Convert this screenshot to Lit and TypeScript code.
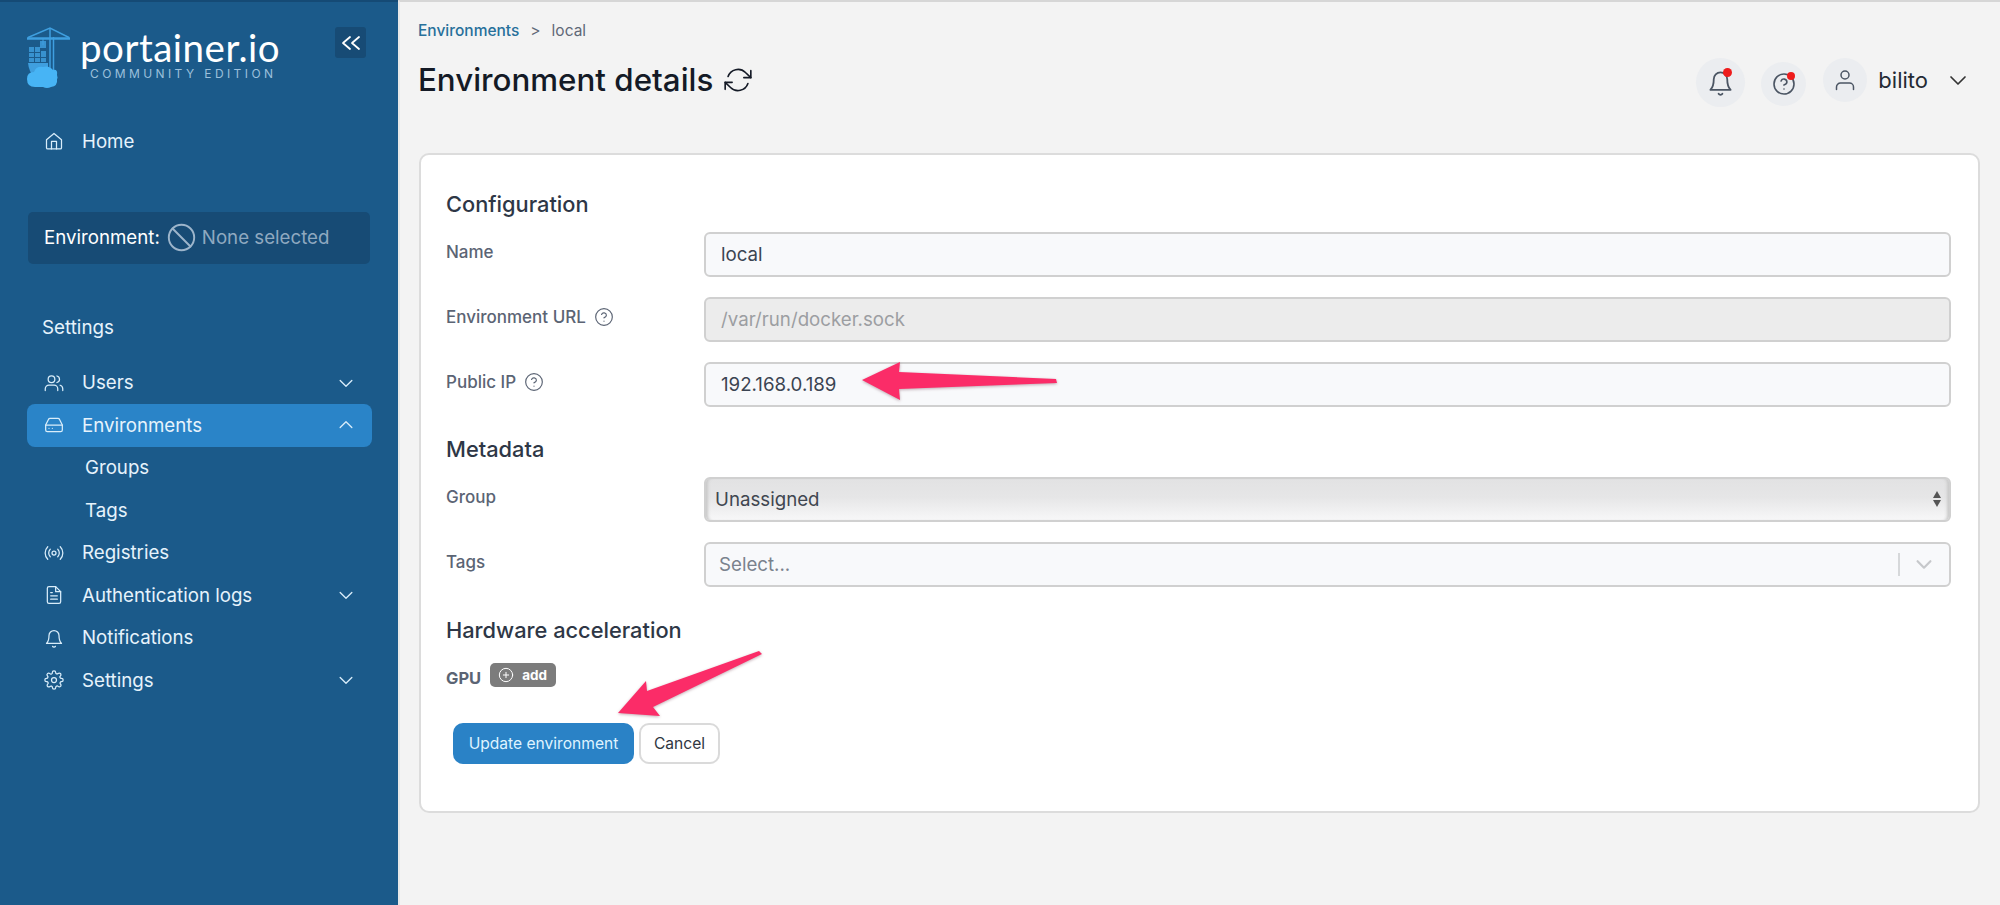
import { LitElement, html, css, svg } from "lit";
import { customElement } from "lit/decorators.js";

const ic = (body: unknown, size = 20, sw = 1.7) => html`<svg width=${size} height=${size} viewBox="0 0 24 24" fill="none" stroke="currentColor" stroke-width=${sw} stroke-linecap="round" stroke-linejoin="round">${body}</svg>`;

const icons: Record<string, unknown> = {
  home: svg`<path d="M3 10.5 12 3l9 7.5V20a1.5 1.5 0 0 1-1.5 1.5h-15A1.5 1.5 0 0 1 3 20z"/><path d="M9 21.5V12.5h6v9"/>`,
  users: svg`<circle cx="9" cy="7.5" r="4"/><path d="M1.5 21v-2a4.5 4.5 0 0 1 4.5-4.5h6a4.5 4.5 0 0 1 4.5 4.5v2"/><path d="M15.5 3.6a4 4 0 0 1 0 7.8"/><path d="M22.5 21v-2a4.5 4.5 0 0 0-3.2-4.3"/>`,
  drive: svg`<path d="M22 12H2"/><path d="M5.5 5 2 12v6a2 2 0 0 0 2 2h16a2 2 0 0 0 2-2v-6l-3.5-7a2 2 0 0 0-1.8-1H7.3a2 2 0 0 0-1.8 1z"/><path d="M6 16h.01M10 16h.01"/>`,
  radio: svg`<circle cx="12" cy="12" r="2.4"/><path d="M16.5 7.5a6.4 6.4 0 0 1 0 9M7.5 16.5a6.4 6.4 0 0 1 0-9M19.5 4.5a10.6 10.6 0 0 1 0 15M4.5 19.5a10.6 10.6 0 0 1 0-15"/>`,
  file: svg`<path d="M14 2H6a2 2 0 0 0-2 2v16a2 2 0 0 0 2 2h12a2 2 0 0 0 2-2V8z"/><path d="M14 2v6h6M16 13H8M16 17H8M10 9H8"/>`,
  bell: svg`<path d="M18 9a6 6 0 0 0-12 0c0 7-2.6 9-3 9.5h18c-.4-.5-3-2.5-3-9.5"/><path d="M10.3 22a2 2 0 0 0 3.4 0"/>`,
  gear: svg`<circle cx="12" cy="12" r="3"/><path d="M19.4 15a1.65 1.65 0 0 0 .33 1.82l.06.06a2 2 0 1 1-2.83 2.83l-.06-.06a1.65 1.65 0 0 0-2.82 1.17V21a2 2 0 1 1-4 0v-.09a1.65 1.65 0 0 0-2.82-1.17l-.06.06a2 2 0 1 1-2.83-2.83l.06-.06A1.65 1.65 0 0 0 3.09 14H3a2 2 0 1 1 0-4h.09a1.65 1.65 0 0 0 1.17-2.82l-.06-.06a2 2 0 1 1 2.83-2.83l.06.06A1.65 1.65 0 0 0 10 3.09V3a2 2 0 1 1 4 0v.09a1.65 1.65 0 0 0 2.82 1.17l.06-.06a2 2 0 1 1 2.83 2.83l-.06.06A1.65 1.65 0 0 0 20.91 10H21a2 2 0 1 1 0 4h-.09a1.65 1.65 0 0 0-1.51 1z"/>`,
  down: svg`<path d="m5 9 7 7 7-7"/>`,
  up: svg`<path d="m5 15 7-7 7 7"/>`,
  help: svg`<circle cx="12" cy="12" r="10"/><path d="M9.1 9a3 3 0 0 1 5.8 1c0 2-3 3-3 3M12 17h.01"/>`,
  refresh: svg`<path d="M23 4v6h-6M1 20v-6h6"/><path d="M3.5 9a9 9 0 0 1 14.9-3.4L23 10M1 14l4.6 4.4A9 9 0 0 0 20.5 15"/>`,
  user: svg`<circle cx="12" cy="7" r="4"/><path d="M3.5 21.5V19a4 4 0 0 1 4-4h9a4 4 0 0 1 4 4v2.5"/>`,
  plus: svg`<circle cx="12" cy="12" r="10"/><path d="M12 8v8M8 12h8"/>`,
};

const logo = html`<svg class="logo" width="46" height="62" viewBox="0 0 46 62" fill="none">
  <g stroke="#3f9fdf"><path d="M1 11.5 H44" stroke-width="2.4"/><path d="M2 10.5 L24 1 L43 10.5" stroke-width="1.4"/><path d="M24 1 V44" stroke-width="1.5"/><path d="M27.5 10 V44" stroke-width="1.5"/><path d="M17 12 V18" stroke-width="1"/></g>
  <g fill="#3f9fdf" opacity=".82"><rect x="14" y="14" width="6" height="7"/><rect x="3" y="20" width="5" height="5"/><rect x="9" y="20" width="5" height="5"/><rect x="3" y="26" width="5" height="4"/><rect x="9" y="26" width="5" height="4"/><rect x="15" y="24" width="5" height="6"/><rect x="3" y="31" width="5" height="4"/><rect x="9" y="31" width="5" height="4"/><rect x="15" y="31" width="5" height="4"/></g>
  <path d="M2 36 H22 V42 L8 50 Q3 45 2 36Z" fill="#3f9fdf"/>
  <path d="M9 60 Q1 60 1 52 Q1 45 8 45 Q10 39 17 40 Q23 38 27 43 Q32 42 31 48 Q32 51 31 52 Q32 59 25 60 Q21 62 17 60 Z" fill="#47b4f5"/>
</svg>`;

@customElement("app-root")
export class AppRoot extends LitElement {
  static styles = css`
    :host { display: block; position: relative; width: 2000px; height: 905px; overflow: hidden; font-family: Inter, "Liberation Sans", sans-serif; background: #f3f3f3; }
    * { box-sizing: border-box; }
    .app { display: flex; height: 905px; }
    .side { width: 398px; flex: none; background: #1b5a8a; color: #e8f4fc; border-top: 2px solid #154a75; display: flex; flex-direction: column; }
    .brand { display: flex; padding: 25px 0 0 26px; height: 118px; position: relative; }
    .wordmark { margin-left: 8px; display: flex; flex-direction: column; }
    .wm { font-family: Lato, sans-serif; font-size: 38.5px; line-height: 38px; margin-top: 1px; color: #fff; font-weight: 400; letter-spacing: .5px; }
    .ce { font-size: 12px; letter-spacing: 3.4px; color: #9cc0dc; margin: 1px 0 0 10px; line-height: 14px; white-space: nowrap; }
    .collapse { margin-left: auto; margin-right: 32px; width: 31px; height: 31px; border-radius: 3px; background: #174b75; display: flex; align-items: center; justify-content: center; color: #fff; }
    .item { height: 42.5px; display: flex; align-items: center; padding: 0 16px 0 17px; margin: 0 26px 0 27px; font-size: 18.7px; border-radius: 8px; color: #e6f3fc; }
    .item .i { width: 38px; display: flex; flex: none; color: #d9edfa; }
    .item .t { flex: 1; }
    .item .c { display: flex; color: #d9edfa; }
    .item.on { background: #2a84c8; }
    .sub { height: 42.5px; display: flex; align-items: center; padding-left: 85px; font-size: 18.7px; color: #e6f3fc; }
    .envbox { margin: 49px 28px 0; height: 52px; background: #174b75; border-radius: 5px; display: flex; align-items: center; padding-left: 16px; font-size: 18.7px; color: #fff; white-space: nowrap; }
    .envbox svg { margin: 0 6px 0 7px; color: #9db5cb; }
    .envbox .none { color: #8fa9c0; }
    .sect { margin: 51px 0 0 42px; font-size: 18.8px; line-height: 26px; height: 26px; color: #e6f3fc; }
    .list { margin-top: 21px; }
    .main { flex: 1; min-width: 0; display: flex; flex-direction: column; border-top: 2px solid #d6d6d6; border-left: 2px solid #e8e8e8; padding: 0 20px 0 18px; }
    .top { display: flex; justify-content: space-between; height: 151px; }
    .crumbs { margin-top: 20px; font-size: 15.5px; line-height: 18px; color: #5f6877; display: flex; }
    .crumbs a { color: #27709b; font-weight: 500; }
    .crumbs span { margin-left: 11px; }
    h1 { margin: 18px 0 0; font-size: 31.3px; line-height: 44px; font-weight: 500; color: #141a26; display: flex; align-items: center; gap: 11px; }
    .tools { display: flex; align-items: flex-start; padding: 56px 10px 0 0; color: #4b5563; }
    .round { border-radius: 50%; background: #ebedf0; display: flex; align-items: center; justify-content: center; position: relative; flex: none; }
    .dot { position: absolute; background: #ee1c1c; border-radius: 50%; }
    .b { width: 49px; height: 49px; }
    .b .dot { width: 9px; height: 9px; top: 10px; right: 13px; }
    .h { width: 45px; height: 44px; margin: 4px 17px 0 16px; }
    .h .dot { width: 8px; height: 8px; top: 10px; right: 11px; }
    .u { width: 44px; height: 44px; }
    .name { font-size: 22px; line-height: 44px; color: #242a33; margin-left: 11px; }
    .chev { margin: 10px 0 0 18px; color: #333; display: flex; }
    .card { width: 1561px; height: 660px; margin-left: 1px; background: #fff; border: 2px solid #dcdcdc; border-radius: 10px; padding: 36px 21px 0 25px; }
    h2 { margin: 0; font-size: 21.8px; line-height: 26px; font-weight: 500; color: #2e3746; }
    .row { display: grid; grid-template-columns: 258px 1247px; height: 45px; margin-bottom: 20px; }
    .lab { font-size: 17px; font-weight: 500; color: #5b6474; line-height: 20px; padding-top: 10px; display: flex; gap: 8px; align-items: flex-start; }
    .inp { border: 2px solid #d0d0d0; border-radius: 6px; background: #f8f9fb; font-size: 18.7px; color: #3b4452; display: flex; align-items: center; padding-left: 15px; }
    .inp.dis { background: #ececec; color: #9c9ea2; }
    .sel { padding-left: 9px; justify-content: space-between; color: #3f4650; background: linear-gradient(#e2e2e3 0%, #e6e6e7 45%, #f7f7f8 100%); box-shadow: inset 4px 0 3px -2px #c9c9c9, inset -4px 0 3px -2px #c9c9c9; }
    .updown { display: flex; flex-direction: column; gap: 2px; padding-right: 8px; }
    .updown i { display: block; width: 0; height: 0; border: 4.5px solid transparent; }
    .updown i:first-child { border-bottom: 7px solid #555; border-top: 0; }
    .updown i:last-child { border-top: 7px solid #555; border-bottom: 0; }
    .ph { color: #7a828d; padding-left: 13px; justify-content: space-between; }
    .tagsend { display: flex; align-items: center; color: #c6c8cb; height: 100%; padding-right: 14px; }
    .tagsend b { display: block; width: 2px; height: 23px; background: #d6d8da; margin-right: 13px; }
    .gap1 { margin: 0 0 14.5px; }
    .gpu { display: flex; align-items: flex-start; margin-top: 20px; }
    .gpu strong { font-size: 16.5px; font-weight: 700; color: #5b6474; line-height: 24px; padding-top: 3px; }
    .add { display: flex; align-items: center; gap: 8px; height: 24px; width: 66px; margin-left: 9px; background: #7c7c7c; color: #fff; border-radius: 5px; font-size: 13.5px; font-weight: 700; padding-left: 8px; }
    .btns { display: flex; gap: 5px; margin: 33px 0 0 7px; }
    .btn { height: 41px; border-radius: 10px; font-size: 15.6px; display: flex; align-items: center; justify-content: center; }
    .pri { width: 181px; background: #2a82c6; color: #dff3ff; }
    .sec { width: 81px; background: #fff; border: 2px solid #dadada; color: #2f3642; }
    .arrows { position: absolute; left: 0; top: 0; pointer-events: none; filter: drop-shadow(0 1px 1.5px rgba(80,20,40,.35)); }
  `;

  nav(icon: string, label: string, chev = "", on = false) {
    return html`<div class="item ${on ? "on" : ""}">
      <span class="i">${ic(icons[icon], 20, 1.5)}</span>
      <span class="t">${label}</span>
      ${chev ? html`<span class="c">${ic(icons[chev], 20, 1.6)}</span>` : ""}
    </div>`;
  }

  render() {
    return html`
      <div class="app">
        <aside class="side">
          <div class="brand">
            ${logo}
            <div class="wordmark">
              <span class="wm">portainer.io</span>
              <span class="ce">COMMUNITY EDITION</span>
            </div>
            <span class="collapse">${ic(svg`<path d="m11 18-7-6 7-6M20 18l-7-6 7-6"/>`, 24, 1.8)}</span>
          </div>
          ${this.nav("home", "Home")}
          <div class="envbox">Environment:${ic(svg`<circle cx="12" cy="12" r="10.5"/><path d="M4.6 4.6 19.4 19.4"/>`, 29, 1.6)}<span class="none">None selected</span></div>
          <div class="sect">Settings</div>
          <div class="list">
            ${this.nav("users", "Users", "down")}
            ${this.nav("drive", "Environments", "up", true)}
            <div class="sub">Groups</div>
            <div class="sub">Tags</div>
            ${this.nav("radio", "Registries")}
            ${this.nav("file", "Authentication logs", "down")}
            ${this.nav("bell", "Notifications")}
            ${this.nav("gear", "Settings", "down")}
          </div>
        </aside>
        <main class="main">
          <header class="top">
            <div>
              <div class="crumbs"><a>Environments</a><span>&gt;</span><span>local</span></div>
              <h1>Environment details ${ic(icons.refresh, 28, 1.4)}</h1>
            </div>
            <div class="tools">
              <span class="round b">${ic(icons.bell, 27, 1.6)}<i class="dot"></i></span>
              <span class="round h">${ic(icons.help, 24, 1.6)}<i class="dot"></i></span>
              <span class="round u">${ic(icons.user, 24, 1.5)}</span>
              <span class="name">bilito</span>
              <span class="chev">${ic(icons.down, 24, 1.7)}</span>
            </div>
          </header>
          <section class="card">
            <h2 style="margin-bottom:15px">Configuration</h2>
            <div class="row"><div class="lab">Name</div><div class="inp">local</div></div>
            <div class="row"><div class="lab">Environment URL ${ic(icons.help, 20, 1.4)}</div><div class="inp dis">/var/run/docker.sock</div></div>
            <div class="row"><div class="lab">Public IP ${ic(icons.help, 20, 1.4)}</div><div class="inp">192.168.0.189</div></div>
            <h2 class="gap1" style="margin-top:29px">Metadata</h2>
            <div class="row"><div class="lab">Group</div><div class="inp sel">Unassigned<span class="updown"><i></i><i></i></span></div></div>
            <div class="row"><div class="lab">Tags</div><div class="inp ph">Select...<span class="tagsend"><b></b>${ic(icons.down, 22, 2.4)}</span></div></div>
            <h2 style="margin-top:30px">Hardware acceleration</h2>
            <div class="gpu"><strong>GPU</strong><span class="add">${ic(icons.plus, 16, 1.5)}add</span></div>
            <div class="btns"><div class="btn pri">Update environment</div><div class="btn sec">Cancel</div></div>
          </section>
        </main>
      </div>
      <svg class="arrows" width="2000" height="905" viewBox="0 0 2000 905">
        <path fill="#fb2c68" d="M862 380 L900 362 L899 372 L1056 379 L1057 383 L899 389 L900 400 Z"/>
        <path fill="#fb2c68" d="M618 713 L646 681 L647 691 L759 651 L762 654 L653 707 L660 716 Z"/>
      </svg>
    `;
  }
}
